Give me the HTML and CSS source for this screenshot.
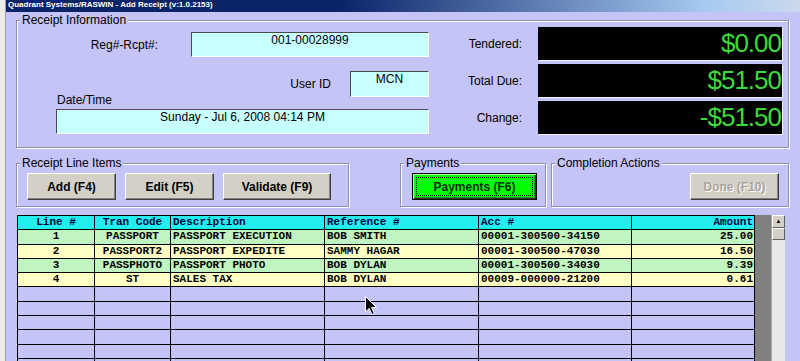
FILE: index.html
```html
<!DOCTYPE html>
<html lang="en">
<head>
<meta charset="UTF-8">
<title>Quadrant Systems/RASWIN - Add Receipt</title>
<link rel="stylesheet" href="styles.css">
</head>
<body>

<div class="screen">
<div class="desk-edge"></div>

<div class="window">
<div class="titlebar">Quadrant Systems/RASWIN - Add Receipt (v:1.0.2153)</div>

<div class="client">

<fieldset class="group info">
<legend>Receipt Information</legend>
<div class="info-body">
    <div class="info-left">
        <span class="lbl lbl-reg">Reg#-Rcpt#:</span>
        <div class="field f-rcpt">001-00028999</div>
        <span class="lbl lbl-user">User ID</span>
        <div class="field f-user">MCN</div>
        <span class="lbl lbl-date">Date/Time</span>
        <div class="field f-date">Sunday - Jul 6, 2008 04:14 PM</div>
    </div>
    <div class="totals">
        <span class="lbl">Tendered:</span>
        <div class="led">$0.00</div>
        <span class="lbl">Total Due:</span>
        <div class="led">$51.50</div>
        <span class="lbl">Change:</span>
        <div class="led">-$51.50</div>
    </div>
</div>
</fieldset>

<div class="actions">
    <fieldset class="group g-items">
    <legend>Receipt Line Items</legend>
    <div class="btn-row">
        <button class="btn w-add">Add (F4)</button>
        <button class="btn w-edit">Edit (F5)</button>
        <button class="btn w-val">Validate (F9)</button>
    </div>
    </fieldset>

    <fieldset class="group g-pay">
    <legend>Payments</legend>
    <div class="btn-row">
        <button class="btn btn-pay">Payments (F6)</button>
    </div>
    </fieldset>

    <fieldset class="group g-done">
    <legend>Completion Actions</legend>
    <div class="btn-row">
        <button class="btn btn-done" disabled>Done (F10)</button>
    </div>
    </fieldset>
</div>

<div class="grid-wrap">
<table class="lines">
<colgroup>
<col style="width:77px"><col style="width:76px"><col style="width:154px">
<col style="width:154px"><col style="width:153px"><col style="width:123px">
</colgroup>
<thead>
<tr><th class="c">Line #</th><th class="c">Tran Code</th><th>Description</th><th>Reference #</th><th>Acc #</th><th class="r">Amount</th></tr>
</thead>
<tbody>
<tr class="g"><td class="c">1</td><td class="c">PASSPORT</td><td>PASSPORT EXECUTION</td><td>BOB SMITH</td><td>00001-300500-34150</td><td class="r">25.00</td></tr>
<tr class="y"><td class="c">2</td><td class="c">PASSPORT2</td><td>PASSPORT EXPEDITE</td><td>SAMMY HAGAR</td><td>00001-300500-47030</td><td class="r">16.50</td></tr>
<tr class="g"><td class="c">3</td><td class="c">PASSPHOTO</td><td>PASSPORT PHOTO</td><td>BOB DYLAN</td><td>00001-300500-34030</td><td class="r">9.39</td></tr>
<tr class="y"><td class="c">4</td><td class="c">ST</td><td>SALES TAX</td><td>BOB DYLAN</td><td>00009-000000-21200</td><td class="r">0.61</td></tr>
<tr><td></td><td></td><td></td><td></td><td></td><td></td></tr>
<tr><td></td><td></td><td></td><td></td><td></td><td></td></tr>
<tr><td></td><td></td><td></td><td></td><td></td><td></td></tr>
<tr><td></td><td></td><td></td><td></td><td></td><td></td></tr>
<tr><td></td><td></td><td></td><td></td><td></td><td></td></tr>
<tr><td></td><td></td><td></td><td></td><td></td><td></td></tr>
</tbody>
</table>
<div class="grid-empty"></div>
<div class="vscroll">
    <div class="sb-up">&#9650;</div>
    <div class="sb-thumb"></div>
</div>
</div>

</div>
</div>
</div>

<!-- mouse pointer -->
<svg class="cursor" width="13" height="20" viewBox="0 0 13 20">
<path d="M0.5 0.5 L0.5 16 L4.2 12.4 L7 18.6 L9.3 17.6 L6.6 11.6 L11.6 11.6 Z" fill="#000" stroke="#fff" stroke-width="1"/>
</svg>

</body>
</html>
```

FILE: styles.css
```css
body{
    margin:0;
    height:361px;
    overflow:hidden;
    background:#c4c4f6;
    font-family:"Liberation Sans", Arial, sans-serif;
    font-size:12px;
    color:#000;
}

.screen{display:flex;height:361px;}

.desk-edge{
    flex:none;
    width:5px;
    background:#ecebe6;
    border-right:1px solid #9c9cb8;
}

.window{flex:1;}

.titlebar{
    height:12px;
    line-height:12px;
    padding-left:2px;
    background:linear-gradient(to right,#0a246a 0%,#0a246a 42%,#a6caf0 88%,#cbd9ee 100%);
    color:#fff;
    font:bold 8px "Liberation Sans", Arial, sans-serif;
    white-space:nowrap;
}

.client{padding:1px 11px 0 10px;}

/* etched group boxes */
.group{
    box-sizing:border-box;
    margin:0;
    padding:0;
    min-width:0;
    border:1px solid #8e8eb2;
    box-shadow:1px 1px 0 #fff, inset 1px 1px 0 #fff;
}
.group legend{
    margin-left:3px;
    padding:0 2px;
    line-height:14px;
    background:#c4c4f6;
}

/* receipt information */
.info{padding:0 6px 13px 0;}

.info-body{display:flex;align-items:flex-start;}

.info-left{
    display:grid;
    grid-template-columns:39px 102px 33px 140px 19px 79px;
    grid-template-rows:25px 14px 20px 6px 12px 25px;
    margin-top:5px;
}

.lbl{line-height:14px;}
.lbl-reg{grid-column:2;grid-row:1;text-align:right;align-self:center;}
.lbl-user{grid-column:4;grid-row:3 / 5;text-align:right;align-self:center;}
.lbl-date{grid-column:2;grid-row:4 / 6;padding-left:1px;align-self:center;}

.field{
    box-sizing:border-box;
    background:#c8ffff;
    border:1px solid;
    border-color:#4a4a4a #fff #fff #4a4a4a;
    text-align:center;
    line-height:14px;
}
.f-rcpt{grid-column:4 / 7;grid-row:1;}
.f-user{grid-column:6;grid-row:3 / 5;}
.f-date{grid-column:2 / 7;grid-row:6;}

.totals{
    margin-left:auto;
    display:grid;
    grid-template-columns:auto 244px;
    grid-auto-rows:33px;
    column-gap:16px;
    row-gap:4px;
}
.totals .lbl{text-align:right;align-self:center;}

.led{
    background:#000;
    color:#3cdc3c;
    font-size:26px;
    letter-spacing:-1px;
    line-height:33px;
    text-align:right;
    padding-right:1px;
    box-shadow:1px 1px 0 #f2f2ff;
}

/* action groups */
.actions{display:flex;margin-top:8px;}

.btn-row{display:flex;gap:9px;padding:3px 0 6px 10px;}

.g-items{width:333px;}
.g-pay{width:146px;margin-left:51px;}
.g-pay .btn-row{padding-left:11px;}
.g-done{flex:1;margin-left:5px;}
.g-done .btn-row{justify-content:flex-end;padding-right:9px;}

.btn{
    height:27px;
    padding:0;
    font:bold 12px "Liberation Sans", Arial, sans-serif;
    color:#000;
    background:#d4d0c8;
    border:1px solid;
    border-color:#fff #404040 #404040 #fff;
    box-shadow:inset -1px -1px 0 #808080;
}
.w-add{width:89px;}
.w-edit{width:89px;}
.w-val{width:108px;}

.btn-pay{
    width:125px;
    background:#00ff00;
    color:#102810;
    border:1px solid #000;
    box-shadow:inset 1px 1px 0 #b8ffb8, inset -1px -1px 0 #303030, inset -2px -2px 0 #00a000;
    outline:1px dotted #000;
    outline-offset:-5px;
}

.btn-done{
    width:89px;
    color:#a8a49c;
    text-shadow:1px 1px 0 #fff;
}

/* line items grid */
.grid-wrap{
    display:flex;
    margin:8px 0 0 1px;
    height:147px;
    overflow:hidden;
}

.lines{
    flex:none;
    align-self:flex-start;
    width:737px;
    border-collapse:collapse;
    table-layout:fixed;
    font:bold 11px "Liberation Mono", "Courier New", monospace;
}
.lines th,.lines td{
    height:13.3px;
    padding:0 2px;
    line-height:13px;
    border:1px solid #000;
    text-align:left;
    white-space:pre;
    overflow:hidden;
}
.lines th{background:#22eef0;color:#00003c;}
.lines td{background:#c4c4f6;}
.lines tr.g td{background:#c0f4c0;}
.lines tr.y td{background:#ffffc4;}
.lines .c{text-align:center;}
.lines .r{text-align:right;padding-right:1px;}

.grid-empty{flex:none;width:16px;background:#808080;}

.vscroll{
    flex:none;
    width:13px;
    background:#e8e8e8;
    border-left:1px solid #a8a8a8;
}
.sb-up{
    height:11px;
    background:#d4d0c8;
    border:1px solid;
    border-color:#fff #606060 #606060 #fff;
    font-size:6px;
    line-height:11px;
    text-align:center;
}
.sb-thumb{
    height:10px;
    background:#d4d0c8;
    border:1px solid;
    border-color:#fff #606060 #606060 #fff;
}

.cursor{position:absolute;left:365px;top:296px;}
```
